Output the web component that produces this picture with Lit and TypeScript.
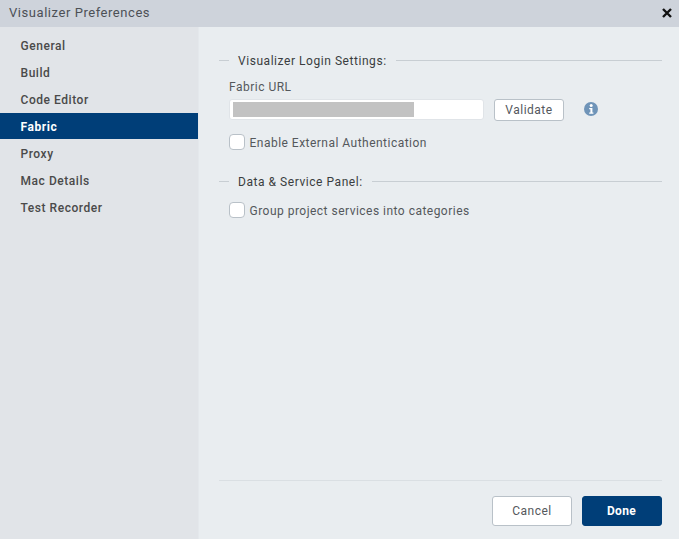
import { LitElement, html, css } from 'lit';
import { customElement, state } from 'lit/decorators.js';

const NAV = ['General', 'Build', 'Code Editor', 'Fabric', 'Proxy', 'Mac Details', 'Test Recorder'];

@customElement('app-root')
export class AppRoot extends LitElement {
  static styles = css`
    :host {
      display: flex;
      flex-direction: column;
      width: 679px;
      height: 539px;
      overflow: hidden;
      background: #e9edf0;
      color: #54585c;
      font-family: Roboto, 'Liberation Sans', sans-serif;
      font-size: 12px;
      letter-spacing: 0.5px;
    }
    .title {
      flex: none;
      height: 27px;
      display: flex;
      align-items: center;
      justify-content: space-between;
      padding: 0 7px 2px 9px;
      box-sizing: border-box;
      background: #ced3db;
      font-size: 13px;
      letter-spacing: 0.55px;
      color: #4c5056;
    }
    .close {
      width: 10px;
      height: 10px;
      display: block;
    }
    .body {
      flex: 1;
      display: flex;
      min-height: 0;
    }
    .side {
      flex: none;
      width: 198px;
      padding-top: 5px;
      background: #e1e4e8;
      border-right: 1px solid #e4e8ec;
      display: flex;
      flex-direction: column;
      gap: 1px;
    }
    .nav {
      height: 26px;
      line-height: 28px;
      padding-left: 20.5px;
      font-weight: 500;
      letter-spacing: 0.55px;
      color: #4a4a4a;
    }
    .nav.on {
      background: #003e78;
      color: #fff;
      font-weight: 700;
    }
    .main {
      flex: 1;
      display: flex;
      flex-direction: column;
      padding: 0 17px 0 20px;
      min-width: 0;
    }
    .legend {
      display: flex;
      align-items: center;
      gap: 9px;
      height: 16px;
      color: #3a3d40;
      letter-spacing: 0.55px;
    }
    .legend span {
      padding-top: 2px;
    }
    .legend::before {
      content: '';
      width: 10px;
      height: 1px;
      background: #c8ced3;
    }
    .legend::after {
      content: '';
      flex: 1;
      height: 1px;
      background: #c8ced3;
    }
    .legend.first { margin-top: 25px; }
    .legend.second { margin-top: 23px; }
    .field { padding-left: 10px; }
    .label {
      margin-top: 12px;
      height: 14px;
      line-height: 14px;
    }
    .url-row {
      display: flex;
      align-items: flex-start;
      margin-top: 5px;
      height: 22px;
    }
    .input {
      position: relative;
      width: 255px;
      height: 21px;
      box-sizing: border-box;
      background: #fff;
      border: 1px solid #e0e4e8;
      border-radius: 3px;
      line-height: 19px;
    }
    /* descenders of the hidden url that stick out under the grey block */
    .peek {
      position: absolute;
      top: 1px;
      color: #54585c;
    }
    .peek.a { left: 21px; }
    .peek.b { left: 80px; }
    .peek.c { left: 145px; }
    .redact {
      position: absolute;
      left: 3px;
      top: 2px;
      width: 181px;
      height: 15px;
      background: #c2c2c2;
    }
    .btn {
      font: inherit;
      letter-spacing: inherit;
      box-sizing: border-box;
      background: #fff;
      border: 1px solid #b9c1c8;
      border-radius: 3px;
      color: #54585c;
      padding: 0;
    }
    .validate {
      width: 70px;
      height: 22px;
      margin-left: 10px;
    }
    .info {
      width: 14px;
      height: 14px;
      margin: 3px 0 0 20px;
      display: block;
    }
    .check {
      display: flex;
      align-items: center;
      gap: 4.5px;
      height: 16px;
    }
    .check .txt {
      padding-top: 2px;
      letter-spacing: 0.48px;
    }
    .check.one { margin-top: 13px; }
    .check.two { margin-top: 13px; }
    .box {
      width: 14px;
      height: 14px;
      background: #fff;
      border: 1px solid #b9c1c8;
      border-radius: 4px;
    }
    .spacer { flex: 1; }
    .foot {
      flex: none;
      height: 59px;
      box-sizing: border-box;
      border-top: 1px solid #dadfe3;
      display: flex;
      justify-content: flex-end;
      align-items: flex-start;
      gap: 10px;
      padding-top: 15px;
    }
    .foot .btn {
      width: 80px;
      height: 30px;
    }
    .foot .done {
      background: #003e78;
      border-color: #003e78;
      color: #fff;
      font-weight: 700;
      letter-spacing: 0.3px;
      padding-right: 1px;
    }
  `;

  @state() private active = 'Fabric';

  render() {
    return html`
      <div class="title">
        <span>Visualizer Preferences</span>
        <svg class="close" viewBox="0 0 10 10">
          <path d="M1 1 9 9M9 1 1 9" stroke="#111" stroke-width="2.4" fill="none" />
        </svg>
      </div>
      <div class="body">
        <div class="side">
          ${NAV.map((n) => html`<div class="nav ${n === this.active ? 'on' : ''}">${n}</div>`)}
        </div>
        <div class="main">
          <div class="legend first"><span>Visualizer Login Settings:</span></div>
          <div class="field">
            <div class="label">Fabric URL</div>
            <div class="url-row">
              <div class="input">
                <span class="peek a">p</span><span class="peek b">g</span><span class="peek c">p</span>
                <div class="redact"></div>
              </div>
              <button class="btn validate">Validate</button>
              <svg class="info" viewBox="0 0 14 14">
                <circle cx="7" cy="7" r="7" fill="#6f94b8" />
                <circle cx="7.2" cy="3.5" r="1.5" fill="#fff" />
                <path d="M5.2 6h3.2v4.4h1v1.3H5.2v-1.3h1.2V7.3H5.2z" fill="#fff" />
              </svg>
            </div>
            <div class="check one"><span class="box"></span><span class="txt">Enable External Authentication</span></div>
          </div>
          <div class="legend second"><span>Data &amp; Service Panel:</span></div>
          <div class="field">
            <div class="check two"><span class="box"></span><span class="txt">Group project services into categories</span></div>
          </div>
          <div class="spacer"></div>
          <div class="foot">
            <button class="btn">Cancel</button>
            <button class="btn done">Done</button>
          </div>
        </div>
      </div>
    `;
  }
}
